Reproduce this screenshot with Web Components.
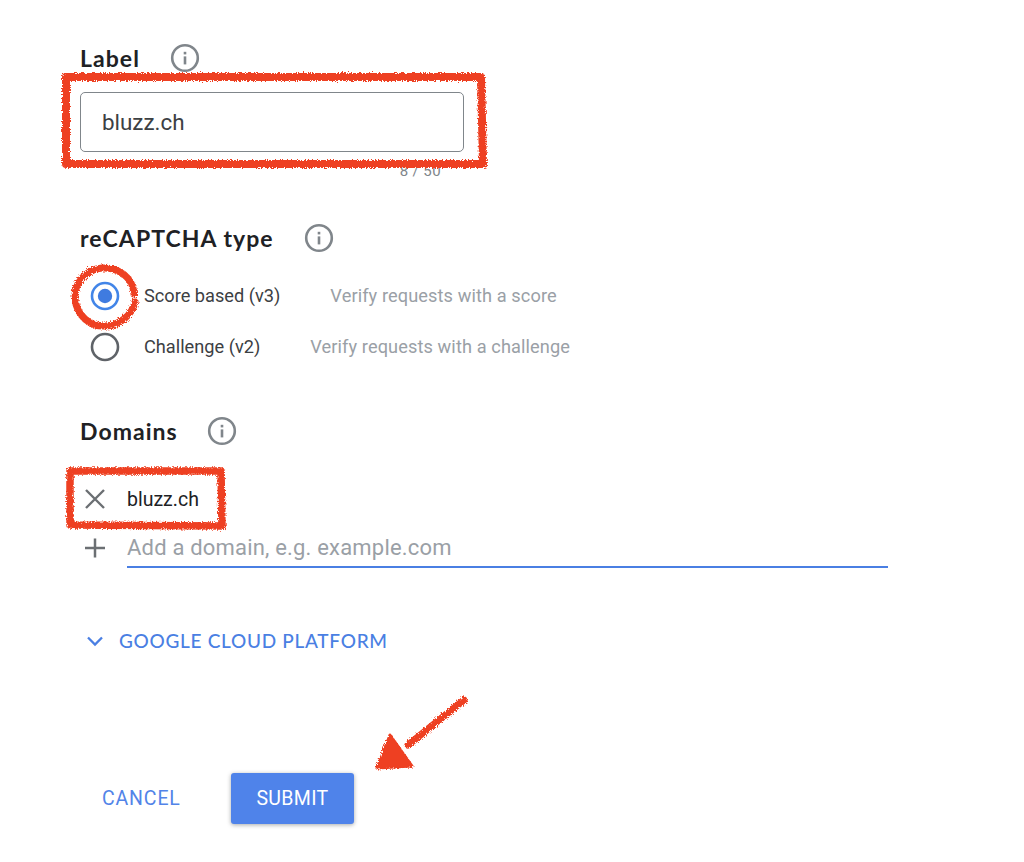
<!DOCTYPE html>
<html><head><meta charset="utf-8"><title>reCAPTCHA form</title>
<style>
html,body{margin:0;background:#fff}
body{width:1024px;height:862px;overflow:hidden;position:relative;font-family:Roboto,sans-serif}
</style></head><body>
<rc-form></rc-form>
<script>
const INFO=`<svg width="30" height="30" viewBox="0 0 30 30" aria-hidden="true"><circle cx="15" cy="15" r="12.800" fill="none" stroke="#80868b" stroke-width="2.600"/><rect x="13.700" y="13.400" width="2.600" height="8" fill="#80868b"/><rect x="13.700" y="8.800" width="2.600" height="2.600" fill="#80868b"/></svg>`;

class RcHeading extends HTMLElement{
  constructor(){super();this.attachShadow({mode:'open'}).innerHTML=`<style>
  :host{display:flex;align-items:center;height:30px;font:700 23px/30px Lato,"Open Sans",sans-serif;letter-spacing:1.05px;color:#202124}
  .g{display:flex;margin-left:var(--gap,30px)}
  </style><slot></slot><span class="g">${INFO}</span>`;}
}
class RcRadio extends HTMLElement{
  constructor(){super();const on=this.hasAttribute('checked');this.attachShadow({mode:'open'}).innerHTML=`<style>
  :host{display:flex;align-items:center;height:30px;font:400 18.2px/30px Roboto,sans-serif;color:#3c4043}
  svg{margin-left:10px;flex:none}
  .t{margin-left:24px}
  .h{margin-left:var(--hint,50px);color:#9aa0a6;letter-spacing:.1px}
  </style><svg width="30" height="30" viewBox="0 0 30 30">
  <circle cx="15" cy="15" r="13" fill="none" stroke="${on?'#4285e8':'#5f6368'}" stroke-width="2.600"/>
  ${on?'<circle cx="15" cy="15" r="7.200" fill="#3f7be0"/>':''}</svg>
  <span class="t"><slot></slot></span><span class="h"><slot name="hint"></slot></span>`;}
}
class RcDomainRow extends HTMLElement{
  constructor(){super();this.attachShadow({mode:'open'}).innerHTML=`<style>
  :host{display:flex;align-items:center;height:38px}
  .i{width:47px;flex:none;display:flex}
  svg{margin-left:2px}
  .c{flex:none;width:761px;font:400 19.500px/38px Roboto,sans-serif;color:#202124}
  :host([add]) .c{color:#9aa0a6;font-size:22px;line-height:40px;letter-spacing:.19px;border-bottom:2.500px solid #4a7fe3;box-sizing:border-box;height:40px}
  </style><span class="i"><slot name="icon"></slot></span><span class="c"><slot></slot></span>`;}
}
class RcAnnotations extends HTMLElement{
  constructor(){super();this.attachShadow({mode:'open'}).innerHTML=`<style>
  :host{position:absolute;left:0;top:0;width:1024px;height:862px;pointer-events:none;display:block}
  </style><svg width="1024" height="862" viewBox="0 0 1024 862" aria-hidden="true">
  <defs><filter id="r" x="-5%" y="-5%" width="110%" height="110%"><feTurbulence type="fractalNoise" baseFrequency=".8" numOctaves="2" seed="4"/><feDisplacementMap in="SourceGraphic" scale="5"/><feGaussianBlur stdDeviation=".3"/></filter></defs>
  <g filter="url(#r)" fill="none" stroke="#ee4022" stroke-linejoin="round" stroke-linecap="round">
    <path d="M66 77 L481 77 L483 164 L66 164 Z" stroke-width="8"/>
    <path d="M134 294 C133 277 118 267 102 268 C84 270 74 284 75 299 C77 316 90 327 106 326 C120 325 132 315 135 302" stroke-width="7"/>
    <path d="M70 471 L221 471 L222 526 L70 525 Z" stroke-width="7.500"/>
    <path d="M464 700 L408 745" stroke-width="7"/>
    <path d="M390 735 L377 768 L412 766 Z" fill="#ee4022" stroke-width="3"/>
  </g></svg>`;}
}
class RcForm extends HTMLElement{
  constructor(){super();this.attachShadow({mode:'open'}).innerHTML=`<style>
  :host{display:block;box-sizing:border-box;width:1024px;height:862px;padding:43px 0 0 80px;color:#202124}
  .input{box-sizing:border-box;width:384px;height:60px;margin-top:19px;border:1.500px solid #80868b;border-radius:5px;padding-left:21px;font:400 22.400px/58px Roboto,sans-serif;color:#3c4043}
  .count{width:361px;margin-top:10px;text-align:right;font:400 15px/18px Roboto,sans-serif;color:#80868b;letter-spacing:.4px}
  .h2{margin-top:43px}
  .radios{margin-top:28px;display:flex;flex-direction:column;gap:21px}
  .h3{margin-top:54px;--gap:29px}
  .rows{margin-top:35px;display:flex;flex-direction:column;gap:10px}
  .gcp{display:flex;align-items:center;height:28px;margin-top:60px;font:500 19px/28px Lato,Roboto,sans-serif;color:#4a7fe3;letter-spacing:.71px}
  .gcp svg{margin:0 15px 0 6px}
  .actions{display:flex;align-items:center;margin-top:118px;font:400 19.500px/51px Roboto,sans-serif;letter-spacing:.35px}
  .cancel{margin-left:22px;width:129px;color:#5284e8;letter-spacing:.85px}
  .submit{width:123px;height:51px;text-align:center;color:#fff;background:#4f83ea;border-radius:3px;box-shadow:0 1px 4px rgba(60,64,67,.45)}
  </style>
  <rc-heading>Label</rc-heading>
  <div class="input">bluzz.ch</div>
  <div class="count">8 / 50</div>
  <rc-heading class="h2">reCAPTCHA type</rc-heading>
  <div class="radios">
    <rc-radio checked style="--hint:50px">Score based (v3)<span slot="hint">Verify requests with a score</span></rc-radio>
    <rc-radio style="--hint:50px">Challenge (v2)<span slot="hint">Verify requests with a challenge</span></rc-radio>
  </div>
  <rc-heading class="h3">Domains</rc-heading>
  <div class="rows">
    <rc-domain-row><svg slot="icon" width="24" height="24" viewBox="0 0 24 24" style="margin:-2px 0 0 3px"><path d="M3 3 21 21M21 3 3 21" stroke="#6b6f73" stroke-width="2.400" fill="none"/></svg>bluzz.ch</rc-domain-row>
    <rc-domain-row add><svg slot="icon" width="24" height="24" viewBox="0 0 24 24" style="margin-left:3px"><path d="M12 2.500V21.500M2 12H22" stroke="#6b6f73" stroke-width="2.500" fill="none"/></svg>Add a domain, e.g. example.com</rc-domain-row>
  </div>
  <div class="gcp"><svg width="18" height="12" viewBox="0 0 18 12"><path d="M2 2.500 9 9.500 16 2.500" fill="none" stroke="#4a7fe3" stroke-width="2.300"/></svg>GOOGLE CLOUD PLATFORM</div>
  <div class="actions"><span class="cancel">CANCEL</span><span class="submit">SUBMIT</span></div>`;}
}
customElements.define('rc-heading',RcHeading);
customElements.define('rc-radio',RcRadio);
customElements.define('rc-domain-row',RcDomainRow);
customElements.define('rc-annotations',RcAnnotations);
customElements.define('rc-form',RcForm);
document.body.appendChild(document.createElement('rc-annotations'));
</script>
</body></html>
